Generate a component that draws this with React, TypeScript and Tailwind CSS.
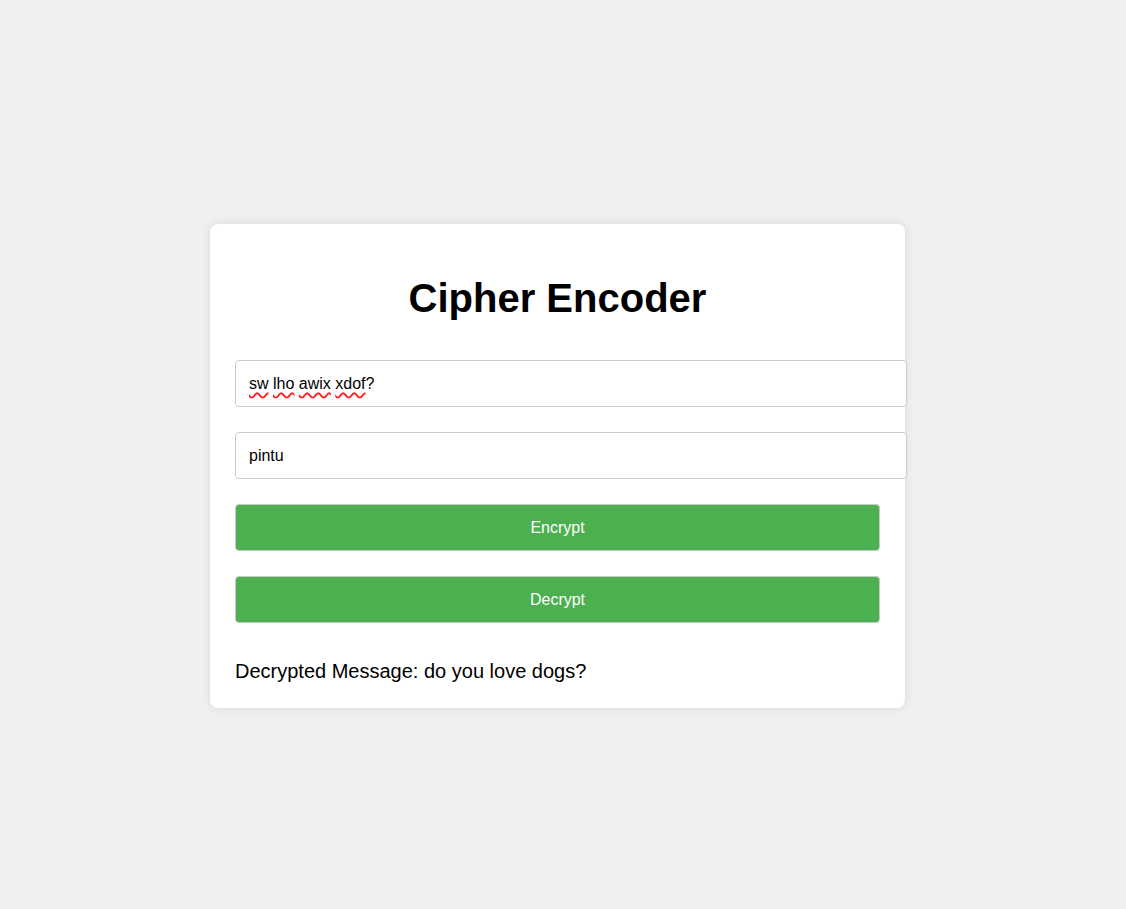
import { useState } from "react";

export default function App() {
  const [message] = useState("sw lho awix xdof?");
  const [keyword] = useState("pintu");

  return (
    <div className="min-h-[909px] bg-[#f0f0f0] font-['Liberation_Sans',Arial,sans-serif] text-black">
      <div className="flex justify-center pt-[224px] pr-[11px]">
        <div className="w-[695px] rounded-lg bg-white px-[25px] pt-[25px] pb-[25px] shadow-[0_0_10px_rgba(0,0,0,0.1)]">
          <h1 className="mt-[26px] mb-[39px] text-center text-[40px] font-bold leading-[46px]">
            Cipher Encoder
          </h1>

          <div className="mb-[25px] flex h-[47px] w-[672px] items-center rounded border border-[#ccc] bg-white px-[13px] text-base">
            {message.split(" ").map((word, i) => (
              <span key={i} className="flex">
                <span className="underline decoration-wavy decoration-[#ff2020] decoration-[1.5px] underline-offset-[3px]">
                  {word.replace("?", "")}
                </span>
                {word.endsWith("?") ? "?" : ""}
                {i < 3 ? <span className="whitespace-pre"> </span> : null}
              </span>
            ))}
          </div>

          <div className="mb-[25px] flex h-[47px] w-[672px] items-center rounded border border-[#ccc] bg-white px-[13px] text-base">
            {keyword}
          </div>

          <button className="mb-[25px] flex h-[47px] w-full items-center justify-center rounded border border-[#c8c8c8] bg-[#4caf50] text-base text-white">
            Encrypt
          </button>
          <button className="flex h-[47px] w-full items-center justify-center rounded border border-[#c8c8c8] bg-[#4caf50] text-base text-white">
            Decrypt
          </button>

          <p className="mt-[37px] text-xl leading-[23px]">
            Decrypted Message: do you love dogs?
          </p>
        </div>
      </div>
    </div>
  );
}
